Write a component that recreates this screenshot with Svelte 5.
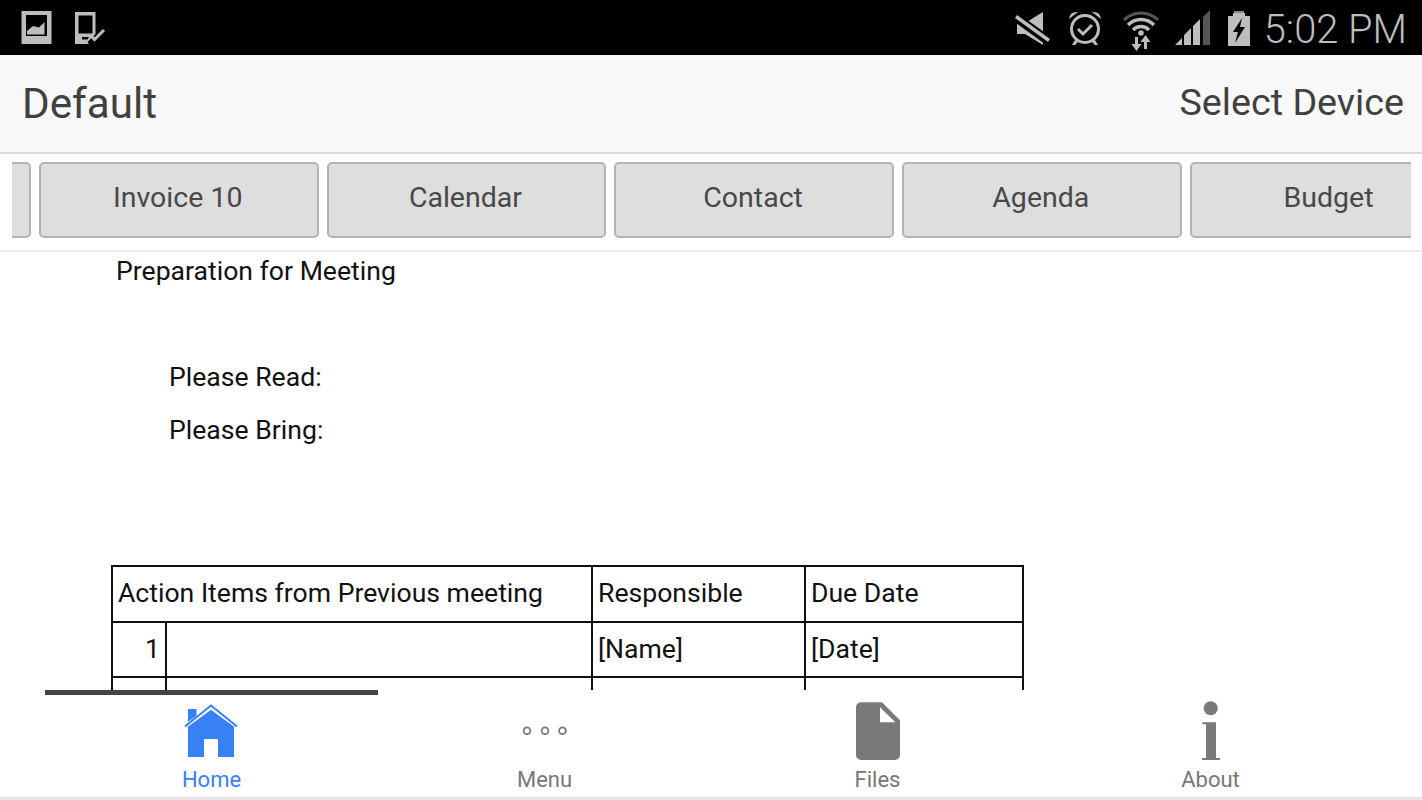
<script>
  const tabs = ['', 'Invoice 10', 'Calendar', 'Contact', 'Agenda', 'Budget'];
  const rows = [['1', '[Name]', '[Date]'], ['', '', '']];
</script>

<div class="screen">
  <div class="status">
    <div class="status-left">
      <svg class="ic-image" width="34" height="36" viewBox="0 0 34 36" aria-hidden="true">
        <path fill="#bdbdbd" fill-rule="evenodd" d="M1.500 1h30v33h-30zM6 5v21h21V5z" />
        <path fill="#bdbdbd" d="M7 24.500v-3.500l6-5 6 1.500 5.500-5.500v12.500z" />
      </svg>
      <svg class="ic-device" width="34" height="36" viewBox="0 0 34 36" aria-hidden="true">
        <path fill="#bdbdbd" fill-rule="evenodd" d="M1 1h20.500v22l-8 8 1.500 2H1zM4.500 4.500v18h14v-18zM8 26v2.500h5.500l1.500-2.500z" />
        <path fill="none" stroke="#bdbdbd" stroke-width="3" d="M16.500 24l4 4.500 9.500-9.500" />
      </svg>
    </div>
    <div class="status-right">
      <svg class="ic-mute" width="38" height="36" viewBox="0 0 38 36" aria-hidden="true">
        <path fill="#bdbdbd" d="M2 12h8L28 1v33L10 23H2z" />
        <path stroke="#000" stroke-width="9" d="M-1 5l36 26" />
        <path stroke="#bdbdbd" stroke-width="3.500" d="M1 5.500l33 24" />
      </svg>
      <svg class="ic-alarm" width="36" height="38" viewBox="0 0 36 38" aria-hidden="true">
        <circle cx="18" cy="20" r="13.500" fill="none" stroke="#bdbdbd" stroke-width="3" />
        <path fill="none" stroke="#bdbdbd" stroke-width="3" d="M11 20l5 5 9-9" />
        <path fill="#bdbdbd" d="M2 10q1-8 9-7zM34 10q-1-8-9-7zM8 31l-3 5h3l3-3zM28 31l3 5h-3l-3-3z" />
      </svg>
      <svg class="ic-wifi" width="38" height="42" viewBox="0 0 38 42" aria-hidden="true">
        <path fill="none" stroke="#555" stroke-width="3" d="M2 10a24 24 0 0 1 34 0" />
        <path fill="none" stroke="#bdbdbd" stroke-width="3.500" d="M6 15a18 18 0 0 1 26 0M11 20a11 11 0 0 1 16 0" />
        <circle cx="19" cy="23" r="2.800" fill="#bdbdbd" />
        <path fill="#bdbdbd" d="M13 27h3v7h3.500l-5 7-5-7H13zM22 39v-7h-3.500l5-7 5 7H25v7z" />
      </svg>
      <svg class="ic-signal" width="38" height="38" viewBox="0 0 38 38" aria-hidden="true">
        <path fill="#bdbdbd" d="M1 36l7-7v7zM10 36V26l7-7v17zM19 36V17l7-7v26z" />
        <path fill="#555" d="M29 36V8l7-7v35z" />
      </svg>
      <svg class="ic-battery" width="24" height="38" viewBox="0 0 24 38" aria-hidden="true">
        <path fill="#8a8a8a" d="M7 1h10v3H7z" />
        <path fill="#bdbdbd" d="M6 3h12v3h5v30H1V6h5z" />
        <path fill="#000" d="M15 8L6 22h5l-3 11 10-16h-5z" />
      </svg>
      <span class="clock">5:02 PM</span>
    </div>
  </div>

  <header class="head">
    <span class="title">Default</span>
    <span class="select">Select Device</span>
  </header>

  <div class="tabs">
    <div class="tab-clip">
      <div class="tab-track">
        {#each tabs as t}
          <button class="tab">{t}</button>
        {/each}
      </div>
    </div>
  </div>

  <main class="doc">
    <p class="p1">Preparation for Meeting</p>
    <p class="p2">Please Read:</p>
    <p class="p3">Please Bring:</p>
    <table>
      <colgroup>
        <col class="c1" /><col class="c2" /><col class="c3" /><col class="c4" />
      </colgroup>
      <tbody>
        <tr>
          <td colspan="2">Action Items from Previous meeting</td>
          <td>Responsible</td>
          <td>Due Date</td>
        </tr>
        {#each rows as r}
          <tr>
            <td class="num">{r[0]}</td>
            <td></td>
            <td>{r[1]}</td>
            <td>{r[2]}</td>
          </tr>
        {/each}
      </tbody>
    </table>
  </main>

  <nav class="nav">
    <div class="item active">
      <svg width="64" height="64" viewBox="1 0 64 64" aria-hidden="true">
        <path fill="#3880f6" d="M9 26.500L32 9.500l23 17v30.500H39V39H25v18H9zM9 9h8.500v8L9 23z" />
        <path fill="none" stroke="#fff" stroke-width="3.500" d="M5 27L32 7.500 59 27" />
        <path fill="none" stroke="#3880f6" stroke-width="2" d="M6 26.500L32 5.500l26 21" />
      </svg>
      <span>Home</span>
    </div>
    <div class="item">
      <svg width="64" height="64" viewBox="0 0 64 64" aria-hidden="true">
        <g fill="none" stroke="#777" stroke-width="1.800">
          <circle cx="14" cy="30.700" r="3.400" />
          <circle cx="32" cy="30.700" r="3.400" />
          <circle cx="49.500" cy="30.700" r="3.400" />
        </g>
      </svg>
      <span>Menu</span>
    </div>
    <div class="item">
      <svg width="64" height="64" viewBox="0 0 64 64" aria-hidden="true">
        <path fill="#7a7a7a" d="M10 2.300h26l18 18V55a5 5 0 0 1-5 5H15a5 5 0 0 1-5-5V7.300a5 5 0 0 1 5-5z" />
        <path fill="#fff" d="M34 7.300v15h15.300z" />
      </svg>
      <span>Files</span>
    </div>
    <div class="item">
      <svg width="64" height="64" viewBox="0 0 64 64" aria-hidden="true">
        <circle cx="31.700" cy="8.300" r="7" fill="#7a7a7a" />
        <path fill="#7a7a7a" d="M23.300 22.300H37V58h4v2H23v-2h4V24.300h-3.700z" />
      </svg>
      <span>About</span>
    </div>
  </nav>
  <div class="strip"></div>
</div>

<style>
  :global(body) {
    margin: 0;
    background: #fff;
  }
  .screen {
    width: 1422px;
    height: 800px;
    display: flex;
    flex-direction: column;
    overflow: hidden;
    font-family: Roboto, "Liberation Sans", sans-serif;
    background: #fff;
  }
  .status {
    height: 55px;
    flex: none;
    background: #000;
    display: flex;
    justify-content: space-between;
    align-items: center;
    padding: 0 15px 0 20px;
  }
  .status-left,
  .status-right {
    display: flex;
    align-items: center;
  }
  .status svg {
    display: block;
    flex: none;
  }
  .ic-image {
    margin-right: 20px;
  }
  .ic-device {
    margin-top: 2px;
  }
  .ic-mute {
    margin-right: 14px;
    margin-top: 2px;
  }
  .ic-alarm {
    margin-right: 19px;
    margin-top: 1px;
  }
  .ic-wifi {
    margin-right: 14px;
    margin-top: 6px;
  }
  .ic-signal {
    margin-right: 15px;
    margin-top: 1px;
  }
  .ic-battery {
    margin-right: 13px;
    margin-top: 2px;
  }
  .clock {
    color: #bdbdbd;
    font-size: 39.800px;
    font-weight: 300;
    line-height: 55px;
    padding-top: 4px;
  }
  .head {
    height: 97px;
    flex: none;
    box-sizing: content-box;
    background: #f8f8f8;
    border-bottom: 2px solid #dcdcdc;
    display: flex;
    justify-content: space-between;
    align-items: center;
    padding: 0 18px 0 22px;
    color: #404040;
  }
  .title {
    font-size: 42.200px;
  }
  .select {
    font-size: 37.700px;
    padding-bottom: 3px;
  }
  .tabs {
    height: 98px;
    flex: none;
    box-sizing: border-box;
    border-bottom: 2px solid #eee;
    padding: 8px 11px 0 12px;
  }
  .tab-clip {
    overflow: hidden;
    height: 76px;
  }
  .tab-track {
    display: flex;
    gap: 8px;
    margin-left: -260.800px;
    width: 2000px;
  }
  .tab {
    width: 279.700px;
    height: 76px;
    flex: none;
    box-sizing: border-box;
    padding: 0 2px 6px 0;
    background: #dedede;
    border: 2px solid #b4b4b4;
    border-radius: 5px;
    color: #484848;
    font-family: inherit;
    font-size: 28.500px;
  }
  .doc {
    flex: 1;
    min-height: 0;
    overflow: hidden;
    color: #111;
    font-size: 26.600px;
  }
  .doc p {
    margin: 0;
    line-height: 38px;
  }
  .p1 {
    padding: 0 0 0 116px;
  }
  .doc .p2 {
    margin-top: 68px;
    padding-left: 169px;
  }
  .doc .p3 {
    margin-top: 15px;
    padding-left: 169px;
  }
  table {
    margin: 116px 0 0 111px;
    width: 911px;
    table-layout: fixed;
    border-collapse: separate;
    border-spacing: 0;
    border-top: 2px solid #111;
    border-left: 2px solid #111;
  }
  .c1 {
    width: 54px;
  }
  .c2 {
    width: 426px;
  }
  .c3 {
    width: 213px;
  }
  .c4 {
    width: 218px;
  }
  td {
    border-right: 2px solid #111;
    border-bottom: 2px solid #111;
    padding: 0 5px 2px 5px;
    white-space: nowrap;
    box-sizing: border-box;
    height: 55.500px;
    color: #111;
  }
  td.num {
    text-align: right;
    padding-right: 5px;
  }
  .nav {
    height: 107px;
    flex: none;
    box-sizing: border-box;
    padding: 0 45px;
    display: grid;
    grid-template-columns: repeat(4, 1fr);
    background: #fff;
  }
  .item {
    border-top: 5px solid transparent;
    padding-top: 5px;
    display: flex;
    flex-direction: column;
    align-items: center;
    color: #777;
    font-size: 22px;
    line-height: 30px;
  }
  .item span {
    padding-top: 1px;
  }
  .item.active {
    border-top-color: #444;
    color: #3880f6;
  }
  .item svg {
    display: block;
    flex: none;
  }
  .strip {
    height: 3px;
    flex: none;
    background: #e6e6e6;
  }
</style>
